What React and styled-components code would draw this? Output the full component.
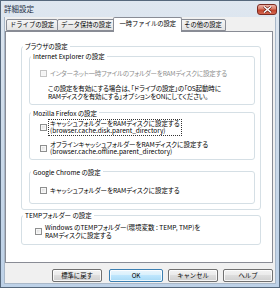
import React from 'react';
import styled, { createGlobalStyle } from 'styled-components';

const GlobalStyle = createGlobalStyle`
  html, body { margin: 0; padding: 0; background: #fff; }
  body { font-family: "Noto Sans CJK JP", "Noto Sans", sans-serif; color: #000; }
`;

const Frame = styled.div`
  width: 280px;
  height: 288px;
  box-sizing: border-box;
  border: 1px solid #56687c;
  background: linear-gradient(180deg, #dfe7f0 0%, #cfdcea 40%, #bdd1e7 100%);
  display: flex;
  flex-direction: column;
`;

const TitleBar = styled.div`
  height: 16px;
  flex: none;
  display: flex;
  align-items: center;
  justify-content: space-between;
  padding: 0 2px 0 3px;
`;

const Title = styled.span`
  font-size: 7.5px;
  line-height: 1;
  color: #1e2f45;
`;

const CloseButton = styled.div`
  width: 20px;
  height: 11px;
  box-sizing: border-box;
  border: 1px solid #7b2b22;
  border-radius: 3px;
  background: linear-gradient(180deg, #ecb3a7 0%, #d97a66 45%, #c2432b 55%, #d36650 100%);
  display: flex;
  align-items: center;
  justify-content: center;
`;

const Client = styled.div`
  flex: 1;
  margin: 0 3px 3px;
  background: #f0f0f0;
  border: 1px solid #a9b8c9;
  border-top: none;
  padding: 0 2px 0 0;
  display: flex;
  flex-direction: column;
`;

const TabRow = styled.div`
  height: 14px;
  flex: none;
  display: flex;
  align-items: flex-end;
  padding-left: 1px;
`;

const Tab = styled.div`
  position: relative;
  box-sizing: border-box;
  height: ${p => (p.$active ? 15 : 12)}px;
  margin: 0 ${p => (p.$active ? -2 : -1)}px ${p => (p.$active ? -1 : 0)}px ${p => (p.$active ? -1 : 0)}px;
  z-index: ${p => (p.$active ? 2 : 1)};
  padding: 0 ${p => (p.$active ? 5 : 3)}px;
  border: 1px solid #898c95;
  border-bottom: ${p => (p.$active ? 'none' : '1px solid #898c95')};
  border-radius: 2px 2px 0 0;
  background: ${p => (p.$active ? '#fff' : 'linear-gradient(180deg, #f6f6f6 0%, #ececec 50%, #e3e3e3 100%)')};
  font-size: 6.3px;
  line-height: ${p => (p.$active ? 12 : 10)}px;
  white-space: nowrap;
`;

const Panel = styled.div`
  height: 232px;
  flex: none;
  box-sizing: border-box;
  border: 1px solid #898c95;
  background: #fff;
  padding: 10px 11px 0 15px;
  font-size: 6.5px;
  font-feature-settings: "palt";
`;

const Group = styled.fieldset`
  margin: ${p => p.$mt || 0}px 0 0;
  padding: 0;
  border: 1px solid #d5dfe5;
  border-radius: 3px;
  min-width: 0;
`;

const Legend = styled.legend`
  padding: 0 2px;
  margin-left: 1px;
  font-size: 6.5px;
  line-height: 8px;
`;

const GroupBody = styled.div`
  padding: ${p => p.$pad};
`;

const CheckRow = styled.div`
  display: flex;
  align-items: center;
  gap: 1px;
  margin-top: ${p => p.$mt || 0}px;
`;

const Box = styled.span`
  width: 7px;
  height: 7px;
  flex: none;
  box-sizing: border-box;
  border: 1px solid ${p => (p.$disabled ? '#c4c4c4' : '#8e8f8f')};
  background: ${p => (p.$disabled ? '#f4f4f4' : 'linear-gradient(135deg, #d6d6d6 0%, #f0f0f0 60%, #fbfbfb 100%)')};
  box-shadow: inset 0 0 0 1px #f7f7f7;
`;

const Label = styled.span`
  padding: 0 1px;
  border: 1px dotted ${p => (p.$focus ? '#333' : 'transparent')};
  line-height: 7.5px;
  letter-spacing: ${p => (p.$disabled ? '-0.2px' : 'normal')};
  color: ${p => (p.$disabled ? '#8d8d8d' : '#000')};
  white-space: nowrap;
`;

const Note = styled.div`
  margin-top: 5px;
  padding-left: 8px;
  line-height: 8px;
  letter-spacing: -0.12px;
  white-space: nowrap;
`;

const ButtonRow = styled.div`
  display: flex;
  justify-content: flex-end;
  gap: 5px;
  margin-top: 6px;
`;

const Button = styled.div`
  width: ${p => p.$w || 50}px;
  height: 13px;
  box-sizing: border-box;
  border: 1px solid ${p => (p.$primary ? '#3c7fb1' : '#707070')};
  border-radius: 2px;
  background: ${p => (p.$primary
    ? 'linear-gradient(180deg, #eaf6fd 0%, #d9f0fc 45%, #bee6fd 50%, #a7d9f5 100%)'
    : 'linear-gradient(180deg, #f2f2f2 0%, #ebebeb 45%, #dddddd 50%, #cfcfcf 100%)')};
  box-shadow: inset 0 0 0 1px rgba(255, 255, 255, 0.8);
  display: flex;
  align-items: center;
  justify-content: center;
  font-size: 6.3px;
  margin-right: ${p => p.$mr || 0}px;
`;

function Check({ disabled, focus, children, mt }) {
  return (
    <CheckRow $mt={mt}>
      <Box $disabled={disabled} />
      <Label $disabled={disabled} $focus={focus}>{children}</Label>
    </CheckRow>
  );
}

export default function App() {
  return (
    <>
      <GlobalStyle />
      <Frame>
        <TitleBar>
          <Title>詳細設定</Title>
          <CloseButton>
            <svg width="9" height="7" viewBox="0 0 9 7">
              <path d="M1 0.5 L8 6.5 M8 0.5 L1 6.5" stroke="#5a1a12" strokeWidth="2.6" />
              <path d="M1 0.5 L8 6.5 M8 0.5 L1 6.5" stroke="#fff" strokeWidth="1.5" />
            </svg>
          </CloseButton>
        </TitleBar>
        <Client>
          <TabRow>
            <Tab>ドライブの設定</Tab>
            <Tab>データ保持の設定</Tab>
            <Tab $active>一時ファイルの設定</Tab>
            <Tab>その他の設定</Tab>
          </TabRow>
          <Panel>
            <Group>
              <Legend>ブラウザの設定</Legend>
              <GroupBody $pad="2px 5px 5px 7px">
                <Group>
                  <Legend>Internet Explorer の設定</Legend>
                  <GroupBody $pad="9px 0 4px 10px">
                    <Check disabled>インターネット一時ファイルのフォルダーをRAMディスクに設定する</Check>
                    <Note>
                      この設定を有効にする場合は、「ドライブの設定」の「OS起動時に<br />
                      RAMディスクを有効にする」オプションをONにしてください。
                    </Note>
                  </GroupBody>
                </Group>
                <Group $mt={4}>
                  <Legend>Mozilla Firefox の設定</Legend>
                  <GroupBody $pad="2px 0 2px 10px">
                    <Check focus>
                      キャッシュフォルダーをRAMディスクに設定する<br />
                      (browser.cache.disk.parent_directory)
                    </Check>
                    <Check mt={4}>
                      オフラインキャッシュフォルダーをRAMディスクに設定する<br />
                      (browser.cache.offline.parent_directory)
                    </Check>
                  </GroupBody>
                </Group>
                <Group $mt={8}>
                  <Legend>Google Chrome の設定</Legend>
                  <GroupBody $pad="10px 0 8px 10px">
                    <Check>キャッシュフォルダーをRAMディスクに設定する</Check>
                  </GroupBody>
                </Group>
              </GroupBody>
            </Group>
            <Group $mt={1}>
              <Legend>TEMPフォルダー の設定</Legend>
              <GroupBody $pad="4px 0 4px 13px">
                <Check>
                  Windows のTEMPフォルダー(環境変数 : TEMP, TMP)を<br />
                  RAMディスクに設定する
                </Check>
              </GroupBody>
            </Group>
          </Panel>
          <ButtonRow>
            <Button $mr={2}>標準に戻す</Button>
            <Button $primary $w={54}>OK</Button>
            <Button>キャンセル</Button>
            <Button>ヘルプ</Button>
          </ButtonRow>
        </Client>
      </Frame>
    </>
  );
}
